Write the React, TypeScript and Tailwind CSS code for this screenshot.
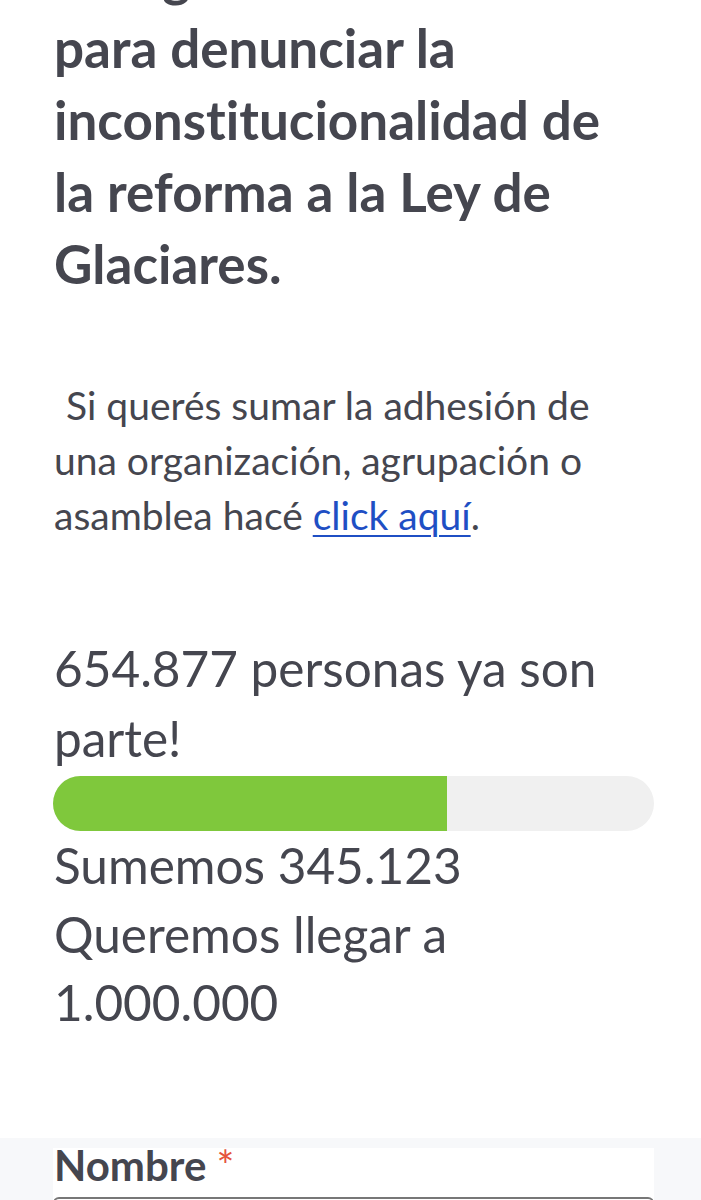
import React from 'react';

const App: React.FC = () => {
  const firmas = 654877;
  const meta = 1000000;
  const pct = (firmas / meta) * 100;

  return (
    <div className="h-[1200px] overflow-hidden bg-white text-[#45464f] [font-variant-ligatures:none]" style={{ fontFamily: 'Lato, "Open Sans", sans-serif' }}>
      <div className="pl-[53px] pr-[47px]">
        <h1 className="-mt-[60px] pl-[1px] text-[53px] font-bold leading-[72px]">
          Una gran demanda<br />
          para denunciar la<br />
          inconstitucionalidad de<br />
          la reforma a la Ley de<br />
          Glaciares.
        </h1>

        <p className="mt-[78px] pl-[1px] indent-[12px] text-[39px] leading-[55px]">
          Si querés sumar la adhesión de una organización, agrupación o asamblea hacé{' '}
          <a href="#" className="text-[#1f4fc4] underline underline-offset-[5px] decoration-2">click aquí</a>.
        </p>

        <div className="mt-[90px]">
          <p className="pl-[1px] text-[49.5px] leading-[70px]">654.877 personas ya son parte!</p>
          <div className="mt-[3px] h-[55px] w-full overflow-hidden rounded-full bg-[#f0f0f0]">
            <div className="h-full bg-[#7fc83c]" style={{ width: `${pct}%` }} />
          </div>
          <div className="pl-[1px] text-[49.5px] leading-[68.5px]">
            <p>Sumemos 345.123</p>
            <p>Queremos llegar a</p>
            <p>1.000.000</p>
          </div>
        </div>
      </div>

      <div className="mt-[101px] bg-[#f7f8fa] pt-[10px]">
        <div className="ml-[53px] mr-[47px] bg-white">
          <label className="block pl-[1px] pt-[1px] text-[42px] font-bold leading-[32px]">
            Nombre <span className="font-normal text-[#e5533d]">*</span>
          </label>
          <div className="mt-[16px] h-[40px] rounded-t-[6px] border-2 border-[#777]" />
        </div>
      </div>
    </div>
  );
};

export default App;
